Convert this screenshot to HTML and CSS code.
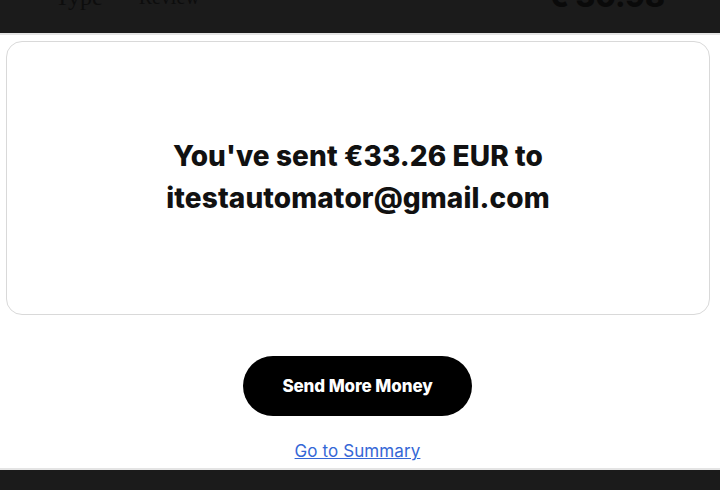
FILE: index.html
```
<!DOCTYPE html>
<html lang="en">
<head>
    <meta charset="UTF-8">
    <meta name="viewport" content="width=device-width, initial-scale=1.0">
    <title>Transfer sent</title>
    <link rel="stylesheet" href="styles.css">
</head>
<body>
    <div class="top-bar">
        <div class="steps">
            <span class="step">Type</span>
            <span class="step step-small">Review</span>
        </div>
        <div class="total">€ 30.98</div>
    </div>

    <div class="card">
        <p class="sent-text">You've sent €33.26 EUR to<br>itestautomator@gmail.com</p>
    </div>

    <div class="actions">
        <button class="send-more">Send More Money</button>
        <a class="summary-link" href="#">Go to Summary</a>
    </div>

    <div class="bottom-bar"></div>
</body>
</html>
```

FILE: styles.css
```
* {
    margin: 0;
    padding: 0;
    box-sizing: border-box;
}

body {
    font-family: 'Inter', 'Noto Sans', sans-serif;
    background: #fff;
    width: 720px;
    height: 490px;
    overflow: hidden;
    display: flex;
    flex-direction: column;
}

.top-bar {
    height: 35px;
    background: #1b1b1b;
    border-bottom: 2px solid #e4e4e4;
    display: flex;
    justify-content: space-between;
    align-items: flex-start;
    padding: 0 55px 0 55px;
    overflow: hidden;
}

.steps {
    display: flex;
    gap: 36px;
    margin-top: -16px;
}

.step {
    font-family: 'Liberation Serif', serif;
    font-size: 24px;
    color: #0d0d0d;
}

.step-small {
    font-size: 20px;
    margin-top: 2px;
}

.total {
    font-family: 'Inter', sans-serif;
    font-weight: 800;
    font-size: 30px;
    color: #0a0a0a;
    margin-top: -22px;
}

.card {
    margin: 6px 10px 0 6px;
    height: 274px;
    border: 1px solid #d9d9d9;
    border-radius: 16px;
    display: flex;
    align-items: center;
    justify-content: center;
}

.sent-text {
    text-align: center;
    font-weight: 800;
    font-size: 28px;
    line-height: 42px;
    letter-spacing: 0.1px;
    color: #111;
    margin-top: -2px;
}

.actions {
    flex: 1;
    display: flex;
    flex-direction: column;
    align-items: center;
    padding-top: 41px;
    padding-right: 5px;
}

.send-more {
    width: 229px;
    height: 60px;
    border: none;
    border-radius: 30px;
    background: #000;
    color: #fff;
    font-family: 'Inter', sans-serif;
    font-weight: 800;
    font-size: 17px;
    letter-spacing: -0.1px;
}

.summary-link {
    margin-top: 25px;
    font-size: 17px;
    color: #3567d6;
    letter-spacing: 0.1px;
}

.bottom-bar {
    height: 22px;
    background: #1b1b1b;
    border-top: 2px solid #e4e4e4;
}
```
